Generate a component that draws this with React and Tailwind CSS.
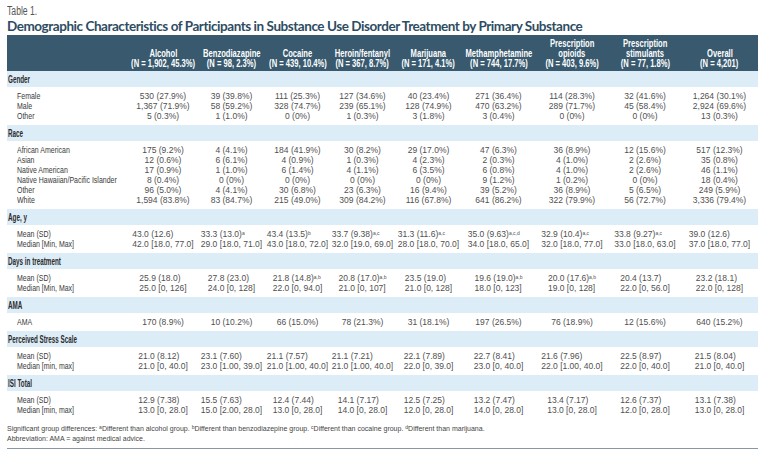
import React from "react";

const cols = "grid grid-cols-[121px_70px_67px_65px_65px_67px_73px_74px_72px_77px]";
const dataFont = "font-['Liberation_Sans',Arial,sans-serif]";

const heads = [
  ["", "Alcohol", "(N = 1,902, 45.3%)"],
  ["", "Benzodiazapine", "(N = 98, 2.3%)"],
  ["", "Cocaine", "(N = 439, 10.4%)"],
  ["", "Heroin/fentanyl", "(N = 367, 8.7%)"],
  ["", "Marijuana", "(N = 171, 4.1%)"],
  ["", "Methamphetamine", "(N = 744, 17.7%)"],
  ["Prescription", "opioids", "(N = 403, 9.6%)"],
  ["Prescription", "stimulants", "(N = 77, 1.8%)"],
  ["", "Overall", "(N = 4,201)"],
];

const groups = [
  {
    title: "Gender",
    rows: [
      ["Female", ["530 (27.9%)", "39 (39.8%)", "111 (25.3%)", "127 (34.6%)", "40 (23.4%)", "271 (36.4%)", "114 (28.3%)", "32 (41.6%)", "1,264 (30.1%)"]],
      ["Male", ["1,367 (71.9%)", "58 (59.2%)", "328 (74.7%)", "239 (65.1%)", "128 (74.9%)", "470 (63.2%)", "289 (71.7%)", "45 (58.4%)", "2,924 (69.6%)"]],
      ["Other", ["5 (0.3%)", "1 (1.0%)", "0 (0%)", "1 (0.3%)", "3 (1.8%)", "3 (0.4%)", "0 (0%)", "0 (0%)", "13 (0.3%)"]],
    ],
  },
  {
    title: "Race",
    rows: [
      ["African American", ["175 (9.2%)", "4 (4.1%)", "184 (41.9%)", "30 (8.2%)", "29 (17.0%)", "47 (6.3%)", "36 (8.9%)", "12 (15.6%)", "517 (12.3%)"]],
      ["Asian", ["12 (0.6%)", "6 (6.1%)", "4 (0.9%)", "1 (0.3%)", "4 (2.3%)", "2 (0.3%)", "4 (1.0%)", "2 (2.6%)", "35 (0.8%)"]],
      ["Native American", ["17 (0.9%)", "1 (1.0%)", "6 (1.4%)", "4 (1.1%)", "6 (3.5%)", "6 (0.8%)", "4 (1.0%)", "2 (2.6%)", "46 (1.1%)"]],
      ["Native Hawaiian/Pacific Islander", ["8 (0.4%)", "0 (0%)", "0 (0%)", "0 (0%)", "0 (0%)", "9 (1.2%)", "1 (0.2%)", "0 (0%)", "18 (0.4%)"]],
      ["Other", ["96 (5.0%)", "4 (4.1%)", "30 (6.8%)", "23 (6.3%)", "16 (9.4%)", "39 (5.2%)", "36 (8.9%)", "5 (6.5%)", "249 (5.9%)"]],
      ["White", ["1,594 (83.8%)", "83 (84.7%)", "215 (49.0%)", "309 (84.2%)", "116 (67.8%)", "641 (86.2%)", "322 (79.9%)", "56 (72.7%)", "3,336 (79.4%)"]],
    ],
  },
  {
    title: "Age, y",
    pair: true,
    labels: ["Mean (SD)", "Median [Min, Max]"],
    cells: [
      [["43.0 (12.6)", ""], "42.0 [18.0, 77.0]"],
      [["33.3 (13.0)", "a"], "29.0 [18.0, 71.0]"],
      [["43.4 (13.5)", "b"], "43.0 [18.0, 72.0]"],
      [["33.7 (9.38)", "a,c"], "32.0 [19.0, 69.0]"],
      [["31.3 (11.6)", "a,c"], "28.0 [18.0, 70.0]"],
      [["35.0 (9.63)", "a,c,d"], "34.0 [18.0, 65.0]"],
      [["32.9 (10.4)", "a,c"], "32.0 [18.0, 77.0]"],
      [["33.8 (9.27)", "a,c"], "33.0 [18.0, 63.0]"],
      [["39.0 (12.6)", ""], "37.0 [18.0, 77.0]"],
    ],
  },
  {
    title: "Days in treatment",
    pair: true,
    labels: ["Mean (SD)", "Median [Min, Max]"],
    cells: [
      [["25.9 (18.0)", ""], "25.0 [0, 126]"],
      [["27.8 (23.0)", ""], "24.0 [0, 128]"],
      [["21.8 (14.8)", "a,b"], "22.0 [0, 94.0]"],
      [["20.8 (17.0)", "a,b"], "21.0 [0, 107]"],
      [["23.5 (19.0)", ""], "21.0 [0, 128]"],
      [["19.6 (19.0)", "a,b"], "18.0 [0, 123]"],
      [["20.0 (17.6)", "a,b"], "19.0 [0, 128]"],
      [["20.4 (13.7)", ""], "22.0 [0, 56.0]"],
      [["23.2 (18.1)", ""], "22.0 [0, 128]"],
    ],
  },
  {
    title: "AMA",
    rows: [
      ["AMA", ["170 (8.9%)", "10 (10.2%)", "66 (15.0%)", "78 (21.3%)", "31 (18.1%)", "197 (26.5%)", "76 (18.9%)", "12 (15.6%)", "640 (15.2%)"]],
    ],
  },
  {
    title: "Perceived Stress Scale",
    pair: true,
    labels: ["Mean (SD)", "Median [min, max]"],
    cells: [
      [["21.0 (8.12)", ""], "21.0 [0, 40.0]"],
      [["23.1 (7.60)", ""], "23.0 [1.00, 39.0]"],
      [["21.1 (7.57)", ""], "21.0 [1.00, 40.0]"],
      [["21.1 (7.21)", ""], "21.0 [1.00, 40.0]"],
      [["22.1 (7.89)", ""], "22.0 [0, 39.0]"],
      [["22.7 (8.41)", ""], "23.0 [0, 40.0]"],
      [["21.6 (7.96)", ""], "22.0 [1.00, 40.0]"],
      [["22.5 (8.97)", ""], "22.0 [0, 40.0]"],
      [["21.5 (8.04)", ""], "21.0 [0, 40.0]"],
    ],
  },
  {
    title: "ISI Total",
    pair: true,
    labels: ["Mean (SD)", "Median [min, max]"],
    cells: [
      [["12.9 (7.38)", ""], "13.0 [0, 28.0]"],
      [["15.5 (7.63)", ""], "15.0 [2.00, 28.0]"],
      [["12.4 (7.44)", ""], "13.0 [0, 28.0]"],
      [["14.1 (7.17)", ""], "14.0 [0, 28.0]"],
      [["12.5 (7.25)", ""], "12.0 [0, 28.0]"],
      [["13.2 (7.47)", ""], "14.0 [0, 28.0]"],
      [["13.4 (7.17)", ""], "13.0 [0, 28.0]"],
      [["12.6 (7.37)", ""], "12.0 [0, 28.0]"],
      [["13.1 (7.38)", ""], "13.0 [0, 28.0]"],
    ],
  },
];

// condensed look: Liberation Sans squeezed horizontally
const Label = ({ children }) => (
  <span className="inline-block origin-left scale-x-[0.735] whitespace-nowrap">{children}</span>
);

function Group({ g }) {
  return (
    <div>
      <div className={`h-[16px] bg-[#ddedf8] pl-[1px] text-[10.5px] leading-[16px] font-bold text-[#2b2b2b] ${dataFont}`}>
        <span className="inline-block origin-left scale-x-[0.6] whitespace-nowrap">{g.title}</span>
      </div>
      <div className="pt-[4px] pb-[4px]">
        {g.pair ? (
          <div className={cols}>
            <div className={`pl-[10px] text-[9.5px] leading-[10px] text-[#3a3a3a] ${dataFont}`}>
              <div className="h-[10px]"><Label>{g.labels[0]}</Label></div>
              <div className="h-[10px]"><Label>{g.labels[1]}</Label></div>
            </div>
            {g.cells.map((c, i) => (
              <div key={i} className="flex justify-center">
                <div className={`text-left text-[8.5px] leading-[10px] text-[#505050] whitespace-nowrap ${dataFont}`}>
                  <div className="h-[10px]">
                    {c[0][0]}
                    {c[0][1] && <sup className="text-[5px]">{c[0][1]}</sup>}
                  </div>
                  <div className="h-[10px]">{c[1]}</div>
                </div>
              </div>
            ))}
          </div>
        ) : (
          g.rows.map((r, i) => (
            <div key={i} className={`${cols} h-[10px] leading-[10px]`}>
              <div className={`pl-[10px] text-[9.5px] text-[#3a3a3a] ${dataFont}`}>
                <Label>{r[0]}</Label>
              </div>
              {r[1].map((v, j) => (
                <div key={j} className={`text-center text-[8.5px] text-[#505050] whitespace-nowrap ${dataFont}`}>
                  {v}
                </div>
              ))}
            </div>
          ))
        )}
      </div>
    </div>
  );
}

export default function App() {
  return (
    <div className="w-[768px] h-[453px] bg-white px-[7px] pt-[5px] overflow-hidden">
      <div className={`h-[12px] text-[12px] leading-[12px] text-[#555] ${dataFont}`}>
        <span className="inline-block origin-left scale-x-[0.72] whitespace-nowrap">Table 1.</span>
      </div>
      <div className="mt-[1px] h-[16px] text-[13.5px] leading-[16px] tracking-[-0.45px] font-bold text-[#2d4c63] font-['Lato',sans-serif] whitespace-nowrap">
        Demographic Characteristics of Participants in Substance Use Disorder Treatment by Primary Substance
      </div>
      <div className="w-[751px] mt-[1px]">
        <div className={`${cols} h-[36px] bg-[#38596e] items-end pb-[2px]`}>
          <div></div>
          {heads.map((h, i) => (
            <div key={i} className={`text-white font-bold text-[10px] leading-[10px] ${dataFont}`}>
              {h[0] && (
                <div className="flex justify-center">
                  <span className="scale-x-[0.76] whitespace-nowrap">{h[0]}</span>
                </div>
              )}
              <div className="flex justify-center">
                <span className="scale-x-[0.76] whitespace-nowrap">{h[1]}</span>
              </div>
              <div className="flex justify-center">
                <span className="scale-x-[0.76] whitespace-nowrap">{h[2]}</span>
              </div>
            </div>
          ))}
        </div>
        {groups.map((g, i) => (
          <Group key={i} g={g} />
        ))}
        <div className={`pt-[5px] text-[7px] leading-[10px] text-[#444] ${dataFont}`}>
          <div>
            Significant group differences: <sup className="text-[5px]">a</sup>Different than alcohol group.{" "}
            <sup className="text-[5px]">b</sup>Different than benzodiazepine group.{" "}
            <sup className="text-[5px]">c</sup>Different than cocaine group.{" "}
            <sup className="text-[5px]">d</sup>Different than marijuana.
          </div>
          <div>Abbreviation: AMA = against medical advice.</div>
        </div>
        <div className="mt-[4px] h-[1px] bg-[#8a98a3]"></div>
      </div>
    </div>
  );
}
